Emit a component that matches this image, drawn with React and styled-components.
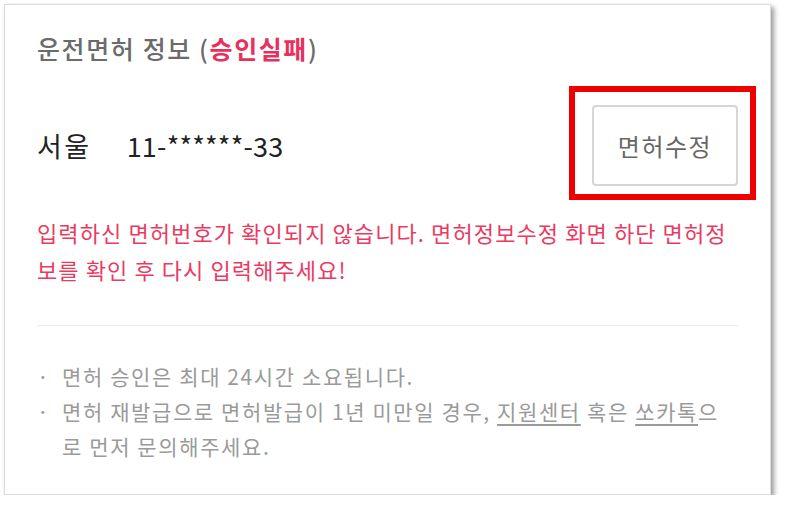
import React from 'react';
import styled, { createGlobalStyle } from 'styled-components';

const GlobalStyle = createGlobalStyle`
  body {
    margin: 0;
    background: #fff;
    font-family: "Noto Sans CJK KR", "Noto Sans", sans-serif;
  }
`;

const Card = styled.div`
  box-sizing: border-box;
  margin: 4px 0 0 4px;
  width: 767px;
  height: 491px;
  padding: 26px 32px 0 32px;
  background: #fff;
  border: 1px solid #dcdcdc;
  box-shadow: 3px 3px 5px rgba(0, 0, 0, 0.4);
`;

const Title = styled.h2`
  margin: 0;
  font-size: 25px;
  line-height: 34px;
  letter-spacing: 1.6px;
  font-weight: 500;
  color: #6b6b6b;
`;

const Fail = styled.span`
  color: #e8305c;
  font-weight: 700;
`;

const LicenseRow = styled.div`
  display: flex;
  align-items: center;
  justify-content: space-between;
  margin-top: 40px;
`;

const LicenseText = styled.div`
  display: flex;
  align-items: baseline;
  gap: 35px;
  font-size: 27px;
  color: #222;
`;

const City = styled.span`
  letter-spacing: 2.5px;
`;

const Number = styled.span`
  letter-spacing: 0.2px;
`;

const ButtonWrap = styled.div`
  position: relative;
`;

const EditButton = styled.button`
  width: 146px;
  height: 81px;
  padding: 0;
  background: #fff;
  border: 2px solid #d6d6d6;
  border-radius: 4px;
  font-family: inherit;
  font-size: 24px;
  letter-spacing: 1.5px;
  color: #666;
  cursor: pointer;
`;

const Highlight = styled.span`
  position: absolute;
  left: -23px;
  top: -19px;
  right: -18px;
  bottom: -14px;
  border: 6px solid #f00000;
  pointer-events: none;
`;

const ErrorText = styled.p`
  margin: 28px 0 0;
  font-size: 22px;
  line-height: 37px;
  letter-spacing: 1.1px;
  word-break: break-all;
  color: #ea3a62;
`;

const Divider = styled.hr`
  margin: 37px 0 0;
  border: 0;
  border-top: 1px solid #ebebeb;
`;

const Notes = styled.ul`
  margin: 33px 0 0;
  padding: 0;
  list-style: none;
`;

const Note = styled.li`
  position: relative;
  padding-left: 25px;
  font-size: 21px;
  line-height: 35px;
  letter-spacing: 1.6px;
  word-break: break-all;
  color: #9a9a9a;

  &::before {
    content: '·';
    position: absolute;
    left: 0;
  }
`;

const Link = styled.a`
  color: inherit;
  text-decoration: underline;
  text-underline-offset: 4px;
`;

export default function App() {
  return (
    <>
      <GlobalStyle />
      <Card>
        <Title>
          운전면허 정보 (<Fail>승인실패</Fail>)
        </Title>
        <LicenseRow>
          <LicenseText>
            <City>서울</City>
            <Number>11-******-33</Number>
          </LicenseText>
          <ButtonWrap>
            <EditButton>면허수정</EditButton>
            <Highlight />
          </ButtonWrap>
        </LicenseRow>
        <ErrorText>
          입력하신 면허번호가 확인되지 않습니다. 면허정보수정 화면 하단 면허정보를 확인 후 다시 입력해주세요!
        </ErrorText>
        <Divider />
        <Notes>
          <Note>면허 승인은 최대 24시간 소요됩니다.</Note>
          <Note>
            면허 재발급으로 면허발급이 1년 미만일 경우, <Link>지원센터</Link> 혹은 <Link>쏘카톡</Link>으로 먼저 문의해주세요.
          </Note>
        </Notes>
      </Card>
    </>
  );
}
